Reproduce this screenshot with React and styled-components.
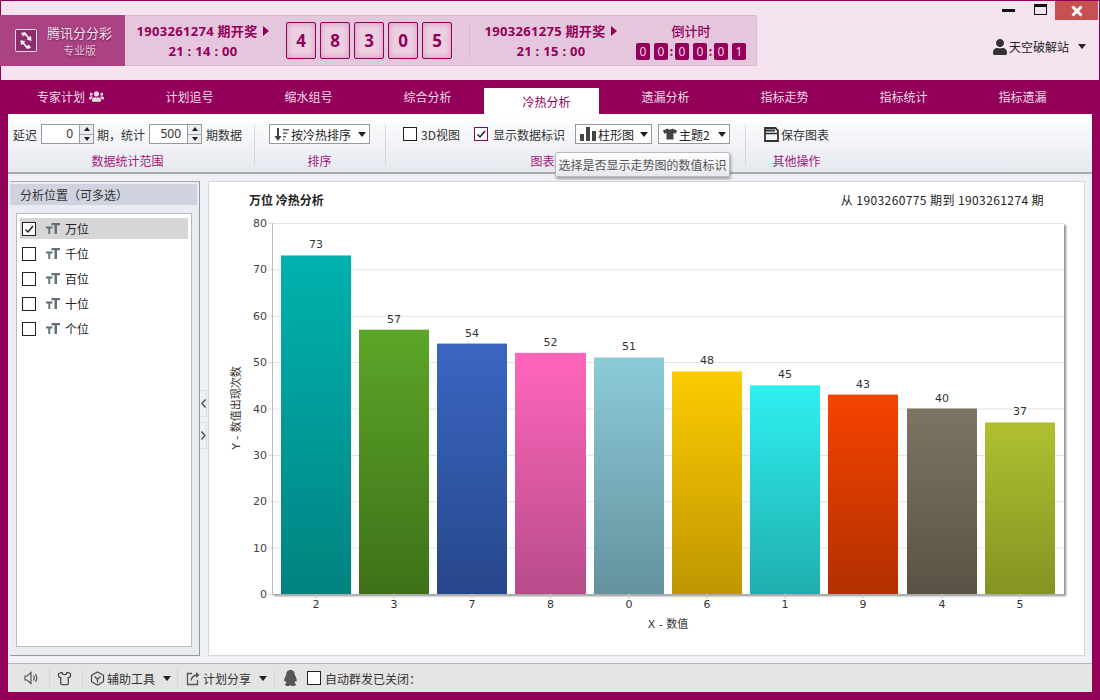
import React from 'react';
import styled, { createGlobalStyle } from 'styled-components';
import { FaUser, FaUsers, FaTshirt } from 'react-icons/fa';
import { Shirt } from 'lucide-react';

const MAGENTA = '#920059';

const GlobalStyle = createGlobalStyle`
  body {
    margin: 0;
    background: #fff;
    font-family: "Noto Sans CJK SC", "Noto Sans", sans-serif;
    font-size: 12px;
    color: #333;
  }
`;

const Window = styled.div`
  width: 1100px;
  height: 700px;
  display: flex;
  flex-direction: column;
  overflow: hidden;
`;

const Header = styled.header`
  height: 80px;
  box-sizing: border-box;
  border: 1px solid ${MAGENTA};
  border-bottom: 0;
  background: #f5e4f0;
  display: flex;
`;

const Banner = styled.div`
  width: 757px;
  height: 51px;
  margin-top: 14px;
  margin-left: -1px;
  box-sizing: border-box;
  border: 1px solid #dcb8d0;
  border-left: 0;
  background: #e6c6dc;
  display: flex;
  align-items: center;
  border-radius: 0 2px 2px 0;
`;

const Logo = styled.div`
  width: 125px;
  height: 51px;
  flex: none;
  background: #ab4284;
  display: flex;
  align-items: center;
  padding-left: 15px;
  box-sizing: border-box;
  gap: 10px;
`;

const LogoText = styled.div`
  color: #f4e3ee;
  text-align: center;
  font-size: 13px;
  line-height: 20px;
  text-shadow: 0 1px 2px rgba(60, 0, 40, 0.6);
  small {
    display: block;
    font-size: 11px;
    line-height: 15px;
    color: #e6c6dc;
  }
`;

const DrawInfo = styled.div`
  width: ${p => p.$w}px;
  flex: none;
  text-align: center;
  color: ${MAGENTA};
  font-family: "Noto Sans", "Noto Sans CJK SC", sans-serif;
  font-weight: 700;
  font-size: 13px;
  letter-spacing: 0.3px;
  line-height: 20px;
  margin-left: ${p => p.$ml}px;
`;

const PlayMark = styled.span`
  display: inline-block;
  width: 0;
  height: 0;
  margin-left: 6px;
  border-left: 6px solid ${MAGENTA};
  border-top: 5px solid transparent;
  border-bottom: 5px solid transparent;
`;

const Balls = styled.div`
  display: flex;
  gap: 4px;
  margin-left: 10px;
`;

const Ball = styled.div`
  width: 30px;
  height: 37px;
  box-sizing: border-box;
  border: 1px solid ${MAGENTA};
  border-radius: 2px;
  background: #ecd0e2;
  box-shadow: inset 0 0 6px rgba(146, 0, 89, 0.3);
  color: ${MAGENTA};
  font-family: "Noto Sans", sans-serif;
  font-weight: 700;
  font-size: 17px;
  display: flex;
  align-items: center;
  justify-content: center;
`;

const BannerSep = styled.div`
  width: 1px;
  height: 32px;
  background: #d8b4cc;
  margin-left: 17px;
`;

const Countdown = styled.div`
  margin-left: 12px;
  display: flex;
  flex-direction: column;
  align-items: center;
  color: ${MAGENTA};
`;

const CountLabel = styled.div`
  font-size: 13px;
  line-height: 18px;
  font-weight: 500;
  margin-bottom: 3px;
`;

const Digits = styled.div`
  display: flex;
  align-items: center;
`;

const Digit = styled.span`
  width: 14px;
  height: 17px;
  border-radius: 2px;
  background: ${MAGENTA};
  color: #f0d0e4;
  font-family: "Noto Sans", sans-serif;
  font-size: 12px;
  line-height: 17px;
  text-align: center;
  margin-right: ${p => (p.$pair ? 4 : 0)}px;
`;

const Colon = styled.span`
  width: 7px;
  text-align: center;
  font-weight: 700;
  line-height: 14px;
`;

const HeaderRight = styled.div`
  flex: 1;
  display: flex;
  flex-direction: column;
  align-items: flex-end;
`;

const WinControls = styled.div`
  display: flex;
  align-items: flex-start;
`;

const MinBtn = styled.div`
  width: 13px;
  height: 3px;
  margin-top: 8px;
  background: #111;
  margin-right: 19px;
`;

const MaxBtn = styled.div`
  width: 13px;
  height: 11px;
  margin-top: 3px;
  box-sizing: border-box;
  border: 1px solid #111;
  border-top-width: 3px;
  margin-right: 8px;
`;

const CloseBtn = styled.div`
  width: 43px;
  height: 19px;
  background: #c75050;
  color: #fff;
  display: flex;
  align-items: center;
  justify-content: center;
  margin-right: 1px;
`;

const UserBox = styled.div`
  margin-top: 18px;
  margin-right: 13px;
  display: flex;
  align-items: center;
  color: #222;
  font-size: 12px;
  gap: 1px;
`;

const Caret = styled.span`
  display: inline-block;
  width: 0;
  height: 0;
  border-top: 5px solid ${p => p.$c || '#222'};
  border-left: 4px solid transparent;
  border-right: 4px solid transparent;
  margin-left: ${p => p.$ml || 0}px;
`;

const Nav = styled.nav`
  height: 34px;
  flex: none;
  background: ${MAGENTA};
  display: flex;
  align-items: flex-end;
  padding-left: 8px;
`;

const Tab = styled.div`
  box-sizing: border-box;
  width: ${p => (p.$active ? 115 : 119)}px;
  height: ${p => (p.$active ? 26 : 34)}px;
  margin-right: ${p => (p.$active ? 4 : 0)}px;
  padding-left: ${p => (p.$active ? 10 : 6)}px;
  padding-bottom: ${p => (p.$active ? 0 : 2)}px;
  background: ${p => (p.$active ? '#fff' : 'transparent')};
  color: ${p => (p.$active ? MAGENTA : '#f0dbe8')};
  display: flex;
  align-items: center;
  justify-content: center;
  gap: 4px;
`;

const Content = styled.div`
  flex: 1;
  min-height: 0;
  display: flex;
  flex-direction: column;
  border: 8px solid ${MAGENTA};
  border-top: 0;
  background: #eef0f5;
`;

const Toolbar = styled.div`
  height: 60px;
  flex: none;
  box-sizing: border-box;
  background: linear-gradient(#ffffff, #e5e8ef);
  border-bottom: 2px solid #a8aab0;
  display: flex;
`;

const Group = styled.div`
  position: relative;
  box-sizing: border-box;
  width: ${p => p.$w}px;
  padding-left: ${p => p.$pl}px;
  flex: none;
  display: inline-flex;
  flex-direction: column;
  align-items: flex-start;
  padding-top: 10px;
`;

const GroupInner = styled.div`
  display: inline-flex;
  flex-direction: column;
  align-items: center;
`;

const GroupRow = styled.div`
  height: 20px;
  display: flex;
  align-items: center;
  white-space: nowrap;
  color: #333;
`;

const GroupLabel = styled.div`
  margin-top: 7px;
  line-height: 20px;
  color: #a5177a;
  margin-right: ${p => p.$shift || 0}px;
`;

const GroupSep = styled.div`
  width: 1px;
  height: 41px;
  margin-top: 11px;
  background: #d6d8de;
  flex: none;
`;

const NumField = styled.div`
  width: 53px;
  height: 20px;
  box-sizing: border-box;
  border: 1px solid #999;
  background: #fff;
  display: flex;
  margin: 0 ${p => p.$mr}px 0 ${p => p.$ml}px;
`;

const NumValue = styled.div`
  flex: 1;
  text-align: right;
  padding-right: 6px;
  line-height: 18px;
  font-family: "Noto Sans", sans-serif;
  color: #333;
`;

const Spinner = styled.div`
  width: 13px;
  border-left: 1px solid #999;
  display: flex;
  flex-direction: column;
`;

const SpinBtn = styled.div`
  flex: 1;
  display: flex;
  align-items: center;
  justify-content: center;
  background: #eceef2;
  & + & {
    border-top: 1px solid #aaa;
  }
  &::after {
    content: '';
    border-left: 3px solid transparent;
    border-right: 3px solid transparent;
    ${p => (p.$up ? 'border-bottom: 4px solid #222;' : 'border-top: 4px solid #222;')}
  }
`;

const Select = styled.div`
  height: 20px;
  width: ${p => p.$w}px;
  box-sizing: border-box;
  border: 1px solid #999;
  background: #fff;
  display: flex;
  align-items: center;
  padding: 0 3px 0 4px;
  margin-left: ${p => p.$ml || 0}px;
  gap: 2px;
  color: #222;
  span:first-of-type {
    flex: 1;
  }
`;

const Check = styled.div`
  width: 14px;
  height: 14px;
  flex: none;
  box-sizing: border-box;
  border: 1px solid ${p => p.$c || '#222'};
  background: #fff;
  display: flex;
  align-items: center;
  justify-content: center;
  margin-left: ${p => p.$ml || 0}px;
  margin-right: ${p => p.$mr || 4}px;
`;

const Tooltip = styled.div`
  position: absolute;
  left: 169px;
  top: 38px;
  width: 175px;
  height: 25px;
  box-sizing: border-box;
  border: 1px solid #bbb;
  border-radius: 2px;
  background: linear-gradient(#fff, #e6e8ee);
  box-shadow: 1px 2px 3px rgba(0, 0, 0, 0.35);
  color: #555;
  line-height: 23px;
  text-align: center;
  white-space: nowrap;
  z-index: 2;
`;

const SaveRow = styled.div`
  display: flex;
  align-items: center;
  gap: 2px;
  height: 20px;
`;

const Main = styled.main`
  flex: 1;
  min-height: 0;
  display: flex;
  padding: 7px 7px 7px 2px;
`;

const SidePanel = styled.aside`
  width: 190px;
  flex: none;
  box-sizing: border-box;
  background: #e9ecf3;
  border-right: 1px solid #999;
  border-bottom: 1px solid #999;
  border-top: 1px solid #aaa;
  padding-top: 2px;
  display: flex;
  flex-direction: column;
`;

const SideTitle = styled.div`
  height: 21px;
  line-height: 21px;
  background: #ced3df;
  margin-right: 2px;
  padding-left: 10px;
  color: #333;
`;

const PosList = styled.div`
  flex: 1;
  margin: 8px 7px 8px 6px;
  padding: 4px 3px;
  background: #fff;
  border: 1px solid #bbb;
`;

const PosRow = styled.div`
  height: 21px;
  margin-bottom: 4px;
  display: flex;
  align-items: center;
  padding-left: 2px;
  background: ${p => (p.$on ? '#d6d6d6' : 'transparent')};
  color: #222;
`;

const PosText = styled.span`
  margin-left: 5px;
  margin-bottom: 1px;
`;

const PosIcon = styled.span`
  display: flex;
  margin-left: 6px;
`;

const Splitter = styled.div`
  width: 8px;
  flex: none;
  display: flex;
  flex-direction: column;
  justify-content: center;
  gap: 5px;
  padding-top: 2px;
`;

const SplitBtn = styled.div`
  height: 27px;
  width: 7px;
  box-sizing: border-box;
  border: 1px solid #dcdee4;
  border-left: 0;
  display: flex;
  align-items: center;
  justify-content: center;
`;

const ChartPanel = styled.section`
  flex: 1;
  min-width: 0;
  box-sizing: border-box;
  background: #fff;
  border: 1px solid #d8d8d8;
  display: flex;
  flex-direction: column;
`;

const ChartHead = styled.div`
  display: flex;
  justify-content: space-between;
  padding: 9px 40px 0 40px;
  line-height: 18px;
  color: #222;
`;

const ChartTitle = styled.div`
  font-weight: 700;
`;

const ChartRange = styled.div`
  letter-spacing: 0.4px;
`;

const StatusBar = styled.footer`
  height: 29px;
  flex: none;
  box-sizing: border-box;
  background: #e4e4e4;
  border-top: 1px solid #b8b8b8;
  display: flex;
  align-items: center;
  color: #333;
  padding-left: 16px;
`;

const StatusItem = styled.div`
  display: flex;
  align-items: center;
  gap: 2px;
`;

const StatusSep = styled.div`
  width: 1px;
  height: 18px;
  background: #d4d4d4;
  margin: 0 ${p => p.$r}px 0 ${p => p.$l}px;
`;

const bars = [
  { label: '2', value: 73, x: 281, w: 70, top: '#00b2ae', bottom: '#008381' },
  { label: '3', value: 57, x: 359, w: 70, top: '#5ca528', bottom: '#3e7119' },
  { label: '7', value: 54, x: 437, w: 70, top: '#3a66c2', bottom: '#27478b' },
  { label: '8', value: 52, x: 515, w: 71, top: '#ff66bb', bottom: '#b84c8b' },
  { label: '0', value: 51, x: 594, w: 70, top: '#8ccbd8', bottom: '#64929f' },
  { label: '6', value: 48, x: 672, w: 70, top: '#fdcb00', bottom: '#bf9600' },
  { label: '1', value: 45, x: 750, w: 70, top: '#2ff0f0', bottom: '#20aeae' },
  { label: '9', value: 43, x: 828, w: 70, top: '#f64300', bottom: '#b13000' },
  { label: '4', value: 40, x: 907, w: 70, top: '#7d7462', bottom: '#595345' },
  { label: '5', value: 37, x: 985, w: 70, top: '#b0c030', bottom: '#859322' },
];

const yOf = v => 594 - (v * 371) / 80;
const chartFont = '"DejaVu Sans", sans-serif';
const axisFont = '"DejaVu Sans", "Noto Sans CJK SC", sans-serif';

const BarChart = () => (
  <svg width="875" height="446" viewBox="209 209 875 446">
    <defs>
      {bars.map(b => (
        <linearGradient key={b.label} id={`bar${b.label}`} x1="0" y1="0" x2="0" y2="1">
          <stop offset="0" stopColor={b.top} />
          <stop offset="1" stopColor={b.bottom} />
        </linearGradient>
      ))}
      <filter id="plotShadow" x="-2%" y="-2%" width="104%" height="104%">
        <feDropShadow dx="2" dy="2" stdDeviation="1.2" floodColor="#000" floodOpacity="0.45" />
      </filter>
    </defs>
    <rect x="272" y="223" width="792" height="371" fill="#fff" filter="url(#plotShadow)" />
    {[0, 10, 20, 30, 40, 50, 60, 70, 80].map(v => (
      <g key={v}>
        <line x1="268" x2="1064" y1={yOf(v) + 0.5} y2={yOf(v) + 0.5} stroke="#e2e2e2" />
        <text x="267" y={yOf(v) + 4} textAnchor="end" fontSize="11" fontFamily={chartFont} fill="#444">
          {v}
        </text>
      </g>
    ))}
    <line x1="272.5" x2="272.5" y1="223" y2="594" stroke="#bbb" />
    <line x1="272" x2="1064" y1="594.5" y2="594.5" stroke="#aaa" />
    {bars.map(b => (
      <g key={b.label}>
        <rect x={b.x} y={yOf(b.value)} width={b.w} height={594 - yOf(b.value)} fill={`url(#bar${b.label})`} />
        <text x={b.x + b.w / 2} y={yOf(b.value) - 7} textAnchor="middle" fontSize="11" fontFamily={chartFont} fill="#333">
          {b.value}
        </text>
        <line x1={b.x + b.w / 2} x2={b.x + b.w / 2} y1="594" y2="599" stroke="#ccc" />
        <text x={b.x + b.w / 2} y="608" textAnchor="middle" fontSize="11" fontFamily={chartFont} fill="#333">
          {b.label}
        </text>
      </g>
    ))}
    <text x="668" y="628" textAnchor="middle" fontSize="11" fill="#333" fontFamily={axisFont}>
      X - 数值
    </text>
    <text transform="translate(240 408) rotate(-90)" textAnchor="middle" fontSize="11" fill="#333" fontFamily={axisFont}>
      Y - 数值出现次数
    </text>
  </svg>
);

const LogoIcon = () => (
  <svg width="22" height="23" viewBox="0 0 22 23">
    <rect x="0.5" y="0.5" width="21" height="22" rx="1" fill="#8e2f6b" stroke="#f2dbe9" />
    <path d="M6 4l4-1 4 5 2-1 .5 5-5-1.500 1.500-1.300-3-3.200-2 1.500z" fill="#f8eef4" />
    <path d="M16 19l-4 1-4-5-2 1-.5-5 5 1.500-1.500 1.300 3 3.200 2-1.500z" fill="#f8eef4" />
  </svg>
);

const CheckMark = () => (
  <svg width="10" height="10" viewBox="0 0 10 10">
    <path d="M1.500 5.500l2.500 2.500 5-6" fill="none" stroke="#222" strokeWidth="1.500" />
  </svg>
);

const SizeIcon = () => (
  <svg width="14" height="11" viewBox="0 0 14 11">
    <path d="M0 3.500h6.500v2H4.200V11H2.300V5.500H0zM5.500 0H14v2.200h-3V11H8.500V2.200h-3z" fill="#5f7278" />
  </svg>
);

const SortIcon = () => (
  <svg width="15" height="13" viewBox="0 0 15 13">
    <path d="M3 0h2v8h2.500L4 13 .5 8H3z" fill="#444" />
    <path d="M9 1h6v1.400H9zM9 4.500h4.500v1.400H9zM9 8h3v1.400H9zM9 11h1.500v1.400H9z" fill="#666" />
  </svg>
);

const BarsIcon = () => (
  <svg width="16" height="14" viewBox="0 0 16 14">
    <path d="M0 7h4v7H0zM6 0h4v14H6zM12 4h4v10h-4z" fill="#444" />
  </svg>
);

const SaveIcon = () => (
  <svg width="15" height="15" viewBox="0 0 15 15" fill="none" stroke="#333">
    <path d="M1 1h10.500L14 3.500V14H1z" strokeWidth="1.800" />
    <path d="M1 6.500h13" strokeWidth="1.600" />
    <path d="M1 3.500h10" strokeWidth="2" />
  </svg>
);

const SpeakerIcon = () => (
  <svg width="14" height="14" viewBox="0 0 14 14" fill="none" stroke="#555" strokeWidth="1.200">
    <path d="M1 5v4h2l4 3.500V1.500L3 5z" />
    <path d="M9.500 4.500q1.500 2.500 0 5M11.500 3q2.500 4 0 8" />
  </svg>
);

const ToolIcon = () => (
  <svg width="15" height="15" viewBox="0 0 15 15" fill="none" stroke="#444" strokeWidth="1.200">
    <path d="M7.500 1l6 3.300v6.400l-6 3.300-6-3.300V4.300z" />
    <path d="M4.500 5.500l3 3 3-3M7.500 8.500v3" />
  </svg>
);

const ShareIcon = () => (
  <svg width="15" height="15" viewBox="0 0 15 15" fill="none" stroke="#555" strokeWidth="1.300">
    <path d="M6 2.500H1.500v11h10V9" />
    <path d="M5 9.500q1-5 6-5.500" />
    <path d="M10 1l3.500 3-3.500 3z" fill="#555" stroke="none" />
  </svg>
);

const QQIcon = () => (
  <svg width="15" height="16" viewBox="0 0 15 16">
    <path
      d="M7.500 0C4.500 0 3.200 2.200 3.200 5c-.8 1.500-2 3.500-2 5.500 0 1 .4 1.300 1.400.6.200.7.500 1.300 1 1.800-1 .4-1.500.9-1.500 1.500C2.100 15.600 3.500 16 5 16c1 0 2-.3 2.500-.8.500.5 1.500.8 2.500.8 1.500 0 2.900-.4 2.900-1.600 0-.6-.5-1.100-1.500-1.500.5-.5.800-1.100 1-1.800 1 .7 1.400.4 1.400-.6 0-2-1.200-4-2-5.500C11.800 2.200 10.500 0 7.500 0z"
      fill="#555"
    />
  </svg>
);

const Chevron = ({ dir }) => (
  <svg width="5" height="9" viewBox="0 0 5 9">
    <path d={dir === 'left' ? 'M4.500 .5L1 4.500l3.500 4' : 'M.5 .5L4 4.500.5 8.500'} fill="none" stroke="#444" strokeWidth="1.200" />
  </svg>
);

const NumberBox = ({ value, ml, mr }) => (
  <NumField $ml={ml} $mr={mr}>
    <NumValue>{value}</NumValue>
    <Spinner>
      <SpinBtn $up />
      <SpinBtn />
    </Spinner>
  </NumField>
);

const DrawBlock = ({ issue, time, w, ml }) => (
  <DrawInfo $w={w} $ml={ml}>
    <div>
      {issue} 期开奖
      <PlayMark />
    </div>
    <div>{time}</div>
  </DrawInfo>
);

const tabs = ['计划追号', '缩水组号', '综合分析', '冷热分析', '遗漏分析', '指标走势', '指标统计', '指标遗漏'];
const positions = ['万位', '千位', '百位', '十位', '个位'];

export default function App() {
  return (
    <Window>
      <GlobalStyle />
      <Header>
        <Banner>
          <Logo>
            <LogoIcon />
            <LogoText>
              腾讯分分彩
              <small>专业版</small>
            </LogoText>
          </Logo>
          <DrawBlock issue="1903261274" time="21 : 14 : 00" w={146} ml={5} />
          <Balls>
            {[4, 8, 3, 0, 5].map((n, i) => (
              <Ball key={i}>{n}</Ball>
            ))}
          </Balls>
          <BannerSep />
          <DrawBlock issue="1903261275" time="21 : 15 : 00" w={146} ml={8} />
          <Countdown>
            <CountLabel>倒计时</CountLabel>
            <Digits>
              <Digit $pair>0</Digit>
              <Digit>0</Digit>
              <Colon>:</Colon>
              <Digit $pair>0</Digit>
              <Digit>0</Digit>
              <Colon>:</Colon>
              <Digit $pair>0</Digit>
              <Digit>1</Digit>
            </Digits>
          </Countdown>
        </Banner>
        <HeaderRight>
          <WinControls>
            <MinBtn />
            <MaxBtn />
            <CloseBtn>
              <svg width="12" height="12" viewBox="0 0 12 12">
                <path d="M1.500 1.500l9 9M10.500 1.500l-9 9" stroke="#fff" strokeWidth="3" />
              </svg>
            </CloseBtn>
          </WinControls>
          <UserBox>
            <FaUser size={16} color="#333" />
            天空破解站
            <Caret $ml={8} />
          </UserBox>
        </HeaderRight>
      </Header>

      <Nav>
        <Tab>
          专家计划
          <FaUsers size={15} />
        </Tab>
        {tabs.map(t => (
          <Tab key={t} $active={t === '冷热分析'}>
            {t}
          </Tab>
        ))}
      </Nav>

      <Content>
        <Toolbar>
          <Group $w={246} $pl={5}>
            <GroupInner>
              <GroupRow>
                延迟
                <NumberBox value="0" ml={4} mr={3} />
                期，统计
                <NumberBox value="500" ml={4} mr={4} />
                期数据
              </GroupRow>
              <GroupLabel>数据统计范围</GroupLabel>
            </GroupInner>
          </Group>
          <GroupSep />
          <Group $w={130} $pl={14}>
            <GroupInner>
              <GroupRow>
                <Select $w={101}>
                  <SortIcon />
                  <span>按冷热排序</span>
                  <Caret />
                </Select>
              </GroupRow>
              <GroupLabel>排序</GroupLabel>
            </GroupInner>
          </Group>
          <GroupSep />
          <Group $w={359} $pl={17}>
            <GroupInner>
              <GroupRow>
                <Check />
                3D视图
                <Check $c={MAGENTA} $ml={14} $mr={5}>
                  <CheckMark />
                </Check>
                显示数据标识
                <Select $w={77} $ml={10}>
                  <BarsIcon />
                  <span>柱形图</span>
                  <Caret />
                </Select>
                <Select $w={72} $ml={6}>
                  <FaTshirt size={14} color="#444" />
                  <span>主题2</span>
                  <Caret />
                </Select>
              </GroupRow>
              <GroupLabel $shift={48}>图表</GroupLabel>
            </GroupInner>
            <Tooltip>选择是否显示走势图的数值标识</Tooltip>
          </Group>
          <GroupSep />
          <Group $w={100} $pl={18}>
            <GroupInner>
              <SaveRow>
                <SaveIcon />
                保存图表
              </SaveRow>
              <GroupLabel>其他操作</GroupLabel>
            </GroupInner>
          </Group>
        </Toolbar>

        <Main>
          <SidePanel>
            <SideTitle>分析位置（可多选）</SideTitle>
            <PosList>
              {positions.map((p, i) => (
                <PosRow key={p} $on={i === 0}>
                  <Check>{i === 0 && <CheckMark />}</Check>
                  <PosIcon>
                    <SizeIcon />
                  </PosIcon>
                  <PosText>{p}</PosText>
                </PosRow>
              ))}
            </PosList>
          </SidePanel>
          <Splitter>
            <SplitBtn>
              <Chevron dir="left" />
            </SplitBtn>
            <SplitBtn>
              <Chevron dir="right" />
            </SplitBtn>
          </Splitter>
          <ChartPanel>
            <ChartHead>
              <ChartTitle>万位 冷热分析</ChartTitle>
              <ChartRange>从 1903260775 期到 1903261274 期</ChartRange>
            </ChartHead>
            <BarChart />
          </ChartPanel>
        </Main>

        <StatusBar>
          <SpeakerIcon />
          <StatusSep $l={11} $r={7} />
          <Shirt size={15} color="#333" strokeWidth={1.8} />
          <StatusSep $l={10} $r={7} />
          <StatusItem>
            <ToolIcon />
            辅助工具
            <Caret $ml={6} />
          </StatusItem>
          <StatusSep $l={6} $r={8} />
          <StatusItem>
            <ShareIcon />
            计划分享
            <Caret $ml={6} />
          </StatusItem>
          <StatusSep $l={7} $r={8} />
          <QQIcon />
          <Check $ml={9} />
          自动群发已关闭：
        </StatusBar>
      </Content>
    </Window>
  );
}
